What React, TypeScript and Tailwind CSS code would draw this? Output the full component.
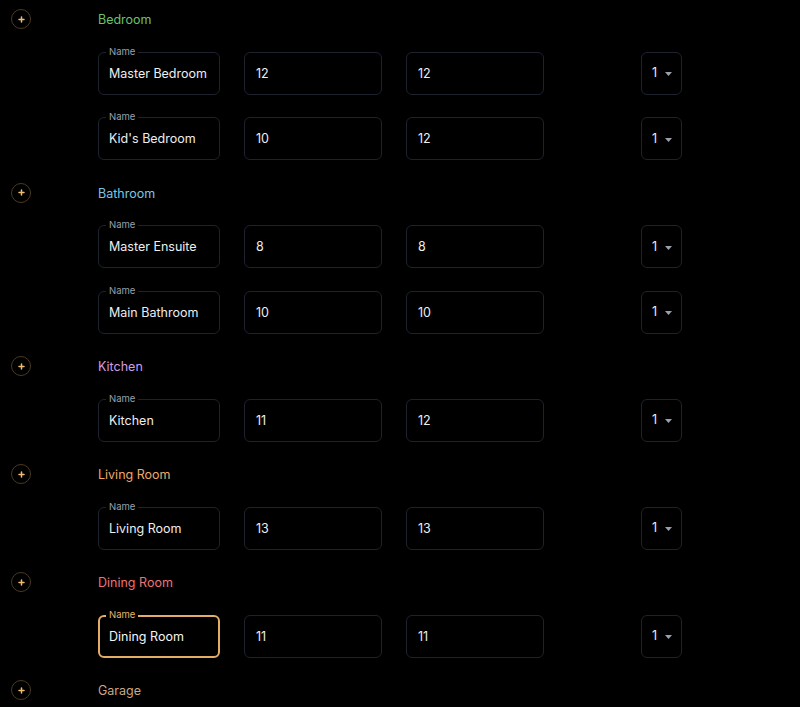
import { useState } from 'react';

type Room = { name: string; width: string; length: string; count: string };

type Section = { title: string; color: string; rooms: Room[] };

const SECTIONS: Section[] = [
  {
    title: 'Bedroom',
    color: 'text-[#6cc06a]',
    rooms: [
      { name: 'Master Bedroom', width: '12', length: '12', count: '1' },
      { name: "Kid's Bedroom", width: '10', length: '12', count: '1' },
    ],
  },
  {
    title: 'Bathroom',
    color: 'text-[#7cc6e2]',
    rooms: [
      { name: 'Master Ensuite', width: '8', length: '8', count: '1' },
      { name: 'Main Bathroom', width: '10', length: '10', count: '1' },
    ],
  },
  {
    title: 'Kitchen',
    color: 'text-[#d49ce6]',
    rooms: [{ name: 'Kitchen', width: '11', length: '12', count: '1' }],
  },
  {
    title: 'Living Room',
    color: 'text-[#eea96c]',
    rooms: [{ name: 'Living Room', width: '13', length: '13', count: '1' }],
  },
  {
    title: 'Dining Room',
    color: 'text-[#ee7474]',
    rooms: [{ name: 'Dining Room', width: '11', length: '11', count: '1' }],
  },
  {
    title: 'Garage',
    color: 'text-[#c9a887]',
    rooms: [],
  },
];

function AddButton() {
  return (
    <button className="flex h-5 w-5 shrink-0 items-center justify-center rounded-full border border-[#4a3a22] text-[#f0bc70]">
      <svg width="7" height="7" viewBox="0 0 7 7" fill="none">
        <path d="M3.5 1v5M1 3.5h5" stroke="currentColor" strokeWidth="1.5" strokeLinecap="round" />
      </svg>
    </button>
  );
}

function NameField({ value, focused }: { value: string; focused?: boolean }) {
  return (
    <div
      className={
        focused
          ? 'relative flex h-[43px] w-[122px] items-center rounded-md border-2 border-[#e3ad66]'
          : 'relative flex h-[43px] w-[122px] items-center rounded-md border border-[#1d222d]'
      }
    >
      <span
        className={
          focused
            ? 'absolute -top-[8px] left-[6px] bg-black px-[3px] text-[9.5px] leading-[12px] text-[#e9b469]'
            : 'absolute -top-[7px] left-[7px] bg-black px-[3px] text-[9.5px] leading-[12px] text-[#9aa1ad]'
        }
      >
        Name
      </span>
      <span className={focused ? 'pl-[9px] pt-[2px] text-[12.5px] text-[#f4f5f6]' : 'pl-[10px] pt-[2px] text-[12.5px] text-[#eceef0]'}>
        {value}
      </span>
    </div>
  );
}

function NumberField({ value }: { value: string }) {
  return (
    <div className="flex h-[43px] w-[138px] items-center rounded-md border border-[#1d222d] pl-[11px] pt-[2px] text-[12.5px] text-[#eceef0]">
      {value}
    </div>
  );
}

function CountSelect({ value }: { value: string }) {
  return (
    <div className="flex h-[43px] w-[41px] items-center rounded-md border border-[#1d222d] pl-[10px] pt-[1px] text-[12.5px] text-[#eceef0]">
      <span>{value}</span>
      <svg className="ml-[8px] mt-[1px]" width="7" height="4" viewBox="0 0 7 4">
        <path d="M0 0h7L3.5 4z" fill="#9aa1ad" />
      </svg>
    </div>
  );
}

export default function App() {
  const [focused] = useState('Dining Room');

  return (
    <div className="min-h-[707px] bg-black pt-[9px] font-['Inter',sans-serif]">
      <div className="flex flex-col gap-[22.5px]">
        {SECTIONS.map((section) => (
          <div key={section.title} className="flex flex-col gap-[22.5px]">
            <div className="flex h-5 items-center pl-[11px]">
              <AddButton />
              <span className={`ml-[67px] mt-[2px] text-[12.5px] leading-5 ${section.color}`}>{section.title}</span>
            </div>
            {section.rooms.map((room) => (
              <div key={room.name} className="flex items-center pl-[98px]">
                <NameField value={room.name} focused={room.name === focused} />
                <div className="ml-[24px]">
                  <NumberField value={room.width} />
                </div>
                <div className="ml-[24px]">
                  <NumberField value={room.length} />
                </div>
                <div className="ml-[97px]">
                  <CountSelect value={room.count} />
                </div>
              </div>
            ))}
          </div>
        ))}
      </div>
    </div>
  );
}
